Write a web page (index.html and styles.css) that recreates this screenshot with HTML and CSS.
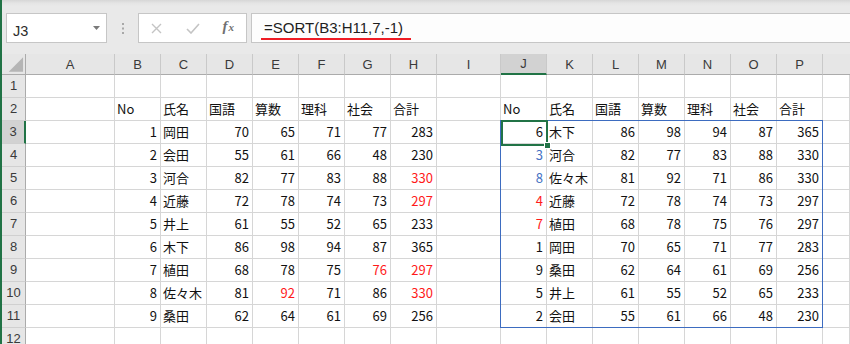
FILE: index.html
```html
<!DOCTYPE html>
<html lang="ja">
<head>
<meta charset="utf-8">
<title>SORT</title>
<link rel="stylesheet" href="styles.css">
</head>
<body>
<div class="topbar">
  <div class="namebox"><span class="nb-text">J3</span><svg class="dd" width="7" height="4" viewBox="0 0 7 4"><path d="M0 0H7L3.5 4Z" fill="#7a7a7a"/></svg></div>
  <div class="sep"><svg width="2" height="11" viewBox="0 0 2 11"><rect x="0" y="0" width="2" height="2" fill="#a8a8a8"/><rect x="0" y="4.5" width="2" height="2" fill="#a8a8a8"/><rect x="0" y="9" width="2" height="2" fill="#a8a8a8"/></svg></div>
  <div class="fbox">
    <span class="fbtn"><svg width="11" height="11" viewBox="0 0 11 11"><path d="M1 1L10 10M10 1L1 10" stroke="#c4c4c4" stroke-width="1.4" fill="none"/></svg></span>
    <span class="fbtn"><svg width="14" height="11" viewBox="0 0 14 11"><path d="M1 6L5 10L13 1" stroke="#c4c4c4" stroke-width="1.6" fill="none"/></svg></span>
    <span class="fbtn fx"><i>f</i><span class="fxx">x</span></span>
  </div>
  <div class="formula"><span class="ftext">=SORT(B3:H11,7,-1)</span></div>
</div>

<div class="wrap">
<div class="sheet">
  <div class="ch corner"><svg width="24" height="20" viewBox="0 0 24 20"><path d="M7 18H22V3Z" fill="#b5b5b5"/></svg></div>
  <div class="ch">A</div><div class="ch">B</div><div class="ch">C</div><div class="ch">D</div><div class="ch">E</div><div class="ch">F</div><div class="ch">G</div><div class="ch">H</div><div class="ch">I</div><div class="ch ch-sel">J</div><div class="ch">K</div><div class="ch">L</div><div class="ch">M</div><div class="ch">N</div><div class="ch">O</div><div class="ch">P</div><div class="ch last"></div>

  <div class="rh">1</div>
  <div class="c"></div><div class="c"></div><div class="c"></div><div class="c"></div><div class="c"></div><div class="c"></div><div class="c"></div><div class="c"></div><div class="c"></div><div class="c"></div><div class="c"></div><div class="c"></div><div class="c"></div><div class="c"></div><div class="c"></div><div class="c"></div><div class="c"></div>

  <div class="rh">2</div>
  <div class="c"></div><div class="c">No</div><div class="c">氏名</div><div class="c">国語</div><div class="c">算数</div><div class="c">理科</div><div class="c">社会</div><div class="c">合計</div><div class="c"></div><div class="c">No</div><div class="c">氏名</div><div class="c">国語</div><div class="c">算数</div><div class="c">理科</div><div class="c">社会</div><div class="c">合計</div><div class="c"></div>

  <div class="rh rh-sel">3</div>
  <div class="c"></div><div class="c n">1</div><div class="c">岡田</div><div class="c n">70</div><div class="c n">65</div><div class="c n">71</div><div class="c n">77</div><div class="c n">283</div><div class="c"></div><div class="c n">6</div><div class="c">木下</div><div class="c n">86</div><div class="c n">98</div><div class="c n">94</div><div class="c n">87</div><div class="c n">365</div><div class="c"></div>

  <div class="rh">4</div>
  <div class="c"></div><div class="c n">2</div><div class="c">会田</div><div class="c n">55</div><div class="c n">61</div><div class="c n">66</div><div class="c n">48</div><div class="c n">230</div><div class="c"></div><div class="c n blue">3</div><div class="c">河合</div><div class="c n">82</div><div class="c n">77</div><div class="c n">83</div><div class="c n">88</div><div class="c n">330</div><div class="c"></div>

  <div class="rh">5</div>
  <div class="c"></div><div class="c n">3</div><div class="c">河合</div><div class="c n">82</div><div class="c n">77</div><div class="c n">83</div><div class="c n">88</div><div class="c n red">330</div><div class="c"></div><div class="c n blue">8</div><div class="c">佐々木</div><div class="c n">81</div><div class="c n">92</div><div class="c n">71</div><div class="c n">86</div><div class="c n">330</div><div class="c"></div>

  <div class="rh">6</div>
  <div class="c"></div><div class="c n">4</div><div class="c">近藤</div><div class="c n">72</div><div class="c n">78</div><div class="c n">74</div><div class="c n">73</div><div class="c n red">297</div><div class="c"></div><div class="c n red">4</div><div class="c">近藤</div><div class="c n">72</div><div class="c n">78</div><div class="c n">74</div><div class="c n">73</div><div class="c n">297</div><div class="c"></div>

  <div class="rh">7</div>
  <div class="c"></div><div class="c n">5</div><div class="c">井上</div><div class="c n">61</div><div class="c n">55</div><div class="c n">52</div><div class="c n">65</div><div class="c n">233</div><div class="c"></div><div class="c n red">7</div><div class="c">植田</div><div class="c n">68</div><div class="c n">78</div><div class="c n">75</div><div class="c n">76</div><div class="c n">297</div><div class="c"></div>

  <div class="rh">8</div>
  <div class="c"></div><div class="c n">6</div><div class="c">木下</div><div class="c n">86</div><div class="c n">98</div><div class="c n">94</div><div class="c n">87</div><div class="c n">365</div><div class="c"></div><div class="c n">1</div><div class="c">岡田</div><div class="c n">70</div><div class="c n">65</div><div class="c n">71</div><div class="c n">77</div><div class="c n">283</div><div class="c"></div>

  <div class="rh">9</div>
  <div class="c"></div><div class="c n">7</div><div class="c">植田</div><div class="c n">68</div><div class="c n">78</div><div class="c n">75</div><div class="c n red">76</div><div class="c n red">297</div><div class="c"></div><div class="c n">9</div><div class="c">桑田</div><div class="c n">62</div><div class="c n">64</div><div class="c n">61</div><div class="c n">69</div><div class="c n">256</div><div class="c"></div>

  <div class="rh">10</div>
  <div class="c"></div><div class="c n">8</div><div class="c">佐々木</div><div class="c n">81</div><div class="c n red">92</div><div class="c n">71</div><div class="c n">86</div><div class="c n red">330</div><div class="c"></div><div class="c n">5</div><div class="c">井上</div><div class="c n">61</div><div class="c n">55</div><div class="c n">52</div><div class="c n">65</div><div class="c n">233</div><div class="c"></div>

  <div class="rh">11</div>
  <div class="c"></div><div class="c n">9</div><div class="c">桑田</div><div class="c n">62</div><div class="c n">64</div><div class="c n">61</div><div class="c n">69</div><div class="c n">256</div><div class="c"></div><div class="c n">2</div><div class="c">会田</div><div class="c n">55</div><div class="c n">61</div><div class="c n">66</div><div class="c n">48</div><div class="c n">230</div><div class="c"></div>

  <div class="rh">12</div>
  <div class="c"></div><div class="c"></div><div class="c"></div><div class="c"></div><div class="c"></div><div class="c"></div><div class="c"></div><div class="c"></div><div class="c"></div><div class="c"></div><div class="c"></div><div class="c"></div><div class="c"></div><div class="c"></div><div class="c"></div><div class="c"></div><div class="c"></div>
</div>
<div class="overlay">
  <div class="spill"></div>
  <div class="selcell"><span class="handle"></span></div>
</div>
</div>
</body>
</html>
```

FILE: styles.css
```css
html, body {
  margin: 0;
  padding: 0;
}
body {
  border-left: 2px solid #217346;
  height: 344px;
  overflow: hidden;
  background: #ffffff;
  font-family: "Noto Sans CJK JP", sans-serif;
}

/* formula bar */
.topbar {
  height: 54px;
  box-sizing: border-box;
  padding-top: 13px;
  display: flex;
  align-items: flex-start;
  background: linear-gradient(#d6d6d6 0, #e4e4e4 3px, #e9e9e9 6px, #e9e9e9 100%);
}
.namebox {
  margin-left: 4px;
  width: 101px;
  height: 30px;
  box-sizing: border-box;
  border: 1px solid #c6c6c6;
  background: #ffffff;
  display: flex;
  align-items: center;
  justify-content: space-between;
  padding: 0 6px 0 6px;
}
.nb-text {
  font-family: "Liberation Sans", sans-serif;
  font-size: 14.5px;
  color: #2b2b2b;
  padding-top: 5px;
}
.dd {
  margin-top: -1px;
}
.sep {
  width: 31px;
  height: 30px;
  display: flex;
  justify-content: center;
  align-items: center;
}
.fbox {
  width: 109px;
  height: 30px;
  box-sizing: border-box;
  border: 1px solid #c6c6c6;
  background: #ffffff;
  display: flex;
  align-items: center;
}
.fbtn {
  width: 36px;
  height: 28px;
  display: flex;
  align-items: center;
  justify-content: center;
}
.fx {
  font-family: "Liberation Serif", serif;
  color: #707070;
  font-size: 15px;
  font-weight: bold;
  align-items: baseline;
  padding-top: 4px;
  box-sizing: border-box;
}
.fx i {
  font-style: italic;
}
.fxx {
  font-style: italic;
  font-size: 11px;
  margin-left: 1px;
}
.formula {
  margin-left: 4px;
  flex: 1;
  height: 30px;
  box-sizing: border-box;
  border: 1px solid #c6c6c6;
  border-right: none;
  background: #fdfdfd;
  padding-left: 9px;
}
.ftext {
  display: inline-block;
  font-family: "Liberation Sans", sans-serif;
  font-size: 15px;
  color: #1e1e1e;
  line-height: 17px;
  margin-top: 5px;
  padding: 0 8px 2px 3px;
  border-bottom: 2px solid #ee1c25;
}

/* sheet */
.wrap {
  display: grid;
}
.sheet, .overlay {
  grid-area: 1 / 1;
  display: grid;
  grid-template-columns: 24px 89px repeat(7, 46px) 64px repeat(7, 46px) 1fr;
  grid-template-rows: 21px repeat(12, 23px);
}
.overlay {
  pointer-events: none;
}
.ch {
  background: #e6e6e6;
  border-right: 1px solid #c9c9c9;
  border-bottom: 1px solid #ababab;
  font-family: "Liberation Sans", sans-serif;
  font-size: 13px;
  color: #3a3a3a;
  text-align: center;
  line-height: 21px;
}
.ch.corner {
  border-right: 1px solid #ababab;
  display: flex;
  align-items: flex-start;
}
.ch.last {
  border-right: none;
}
.ch-sel {
  background: #d2d2d2;
  border-bottom: 2px solid #217346;
  line-height: 20px;
}
.rh {
  background: #e6e6e6;
  border-right: 1px solid #ababab;
  border-bottom: 1px solid #d0d0d0;
  font-family: "Liberation Sans", sans-serif;
  font-size: 13px;
  color: #3a3a3a;
  text-align: center;
  line-height: 22px;
}
.rh-sel {
  background: #d2d2d2;
  border-right: 2px solid #217346;
}
.c {
  border-right: 1px solid #d6d6d6;
  border-bottom: 1px solid #d6d6d6;
  font-size: 13px;
  line-height: 22px;
  padding: 0 3px 0 2px;
  white-space: nowrap;
  overflow: hidden;
  color: #111111;
}
.n {
  text-align: right;
}
.red {
  color: #ff1a1a;
}
.blue {
  color: #4472c4;
}

/* overlays */
.spill {
  grid-column: 11 / 18;
  grid-row: 4 / 13;
  margin: -1px 0 0 -1px;
  border: 1px solid #3d6cc0;
}
.selcell {
  grid-column: 11 / 12;
  grid-row: 4 / 5;
  margin: -1px -1px -2px 0;
  border: 2px solid #217346;
  position: relative;
}
.handle {
  position: absolute;
  right: -5px;
  bottom: -5px;
  width: 5px;
  height: 5px;
  background: #217346;
  border: 1px solid #ffffff;
}
```
